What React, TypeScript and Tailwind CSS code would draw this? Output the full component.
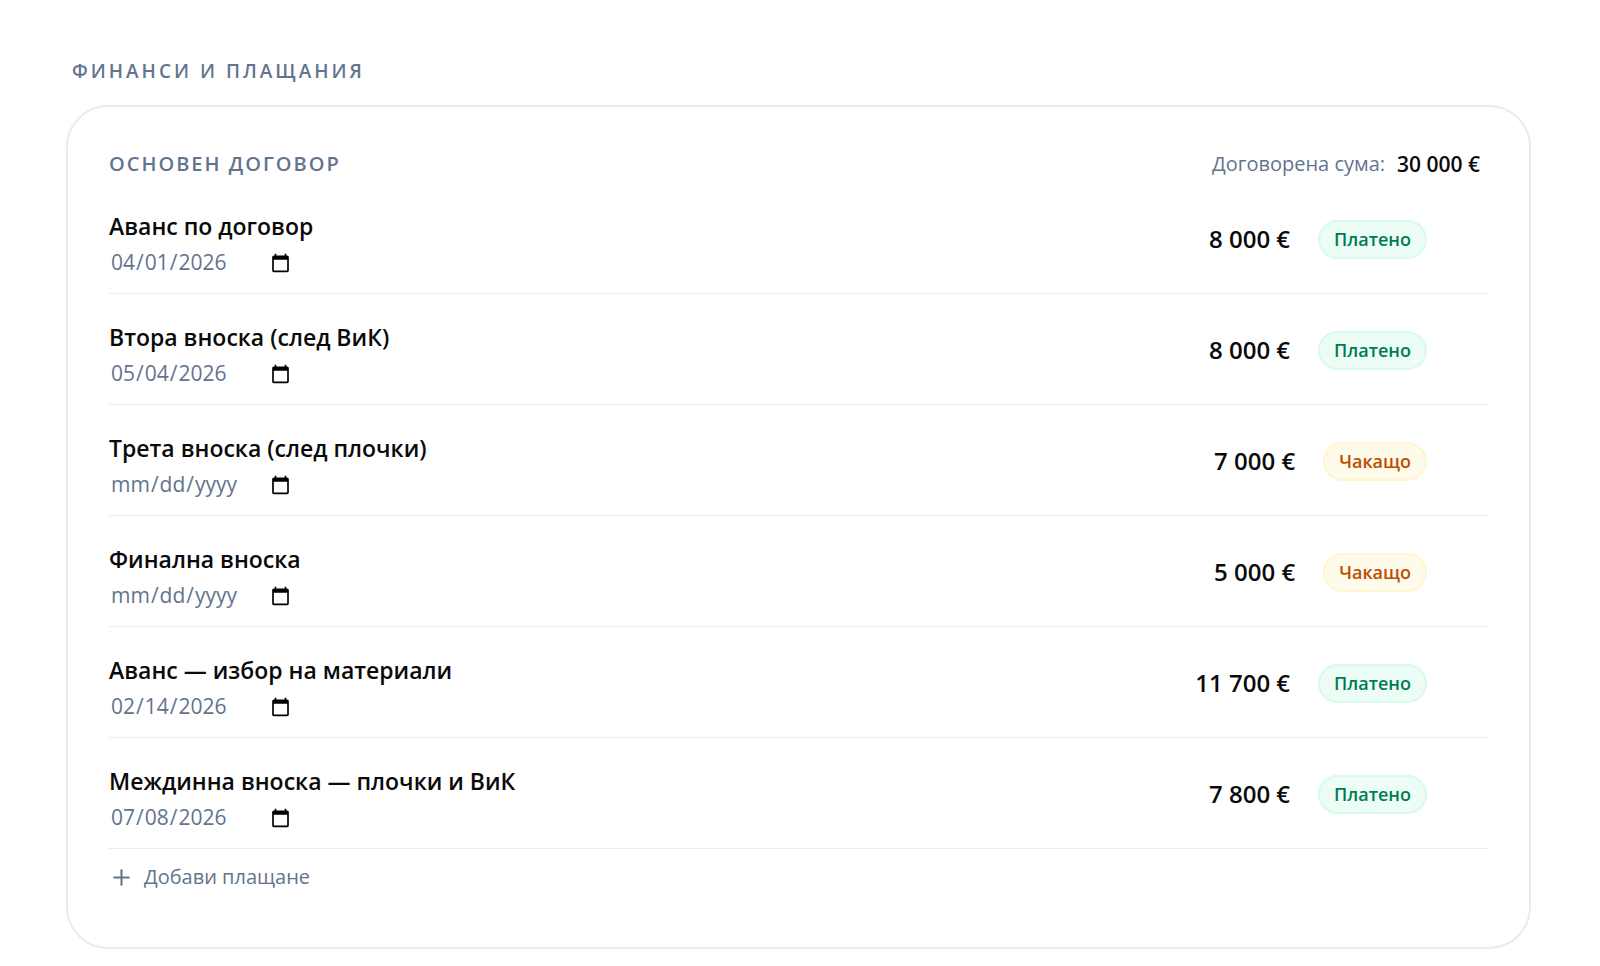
import { Plus } from "lucide-react";

type Status = "paid" | "pending";

interface Payment {
  id: string;
  title: string;
  date: string;
  amount: string;
  status: Status;
}

const payments: Payment[] = [
  { id: "p1", title: "Аванс по договор", date: "2026-04-01", amount: "8 000 €", status: "paid" },
  { id: "p2", title: "Втора вноска (след ВиК)", date: "2026-05-04", amount: "8 000 €", status: "paid" },
  { id: "p3", title: "Трета вноска (след плочки)", date: "", amount: "7 000 €", status: "pending" },
  { id: "p4", title: "Финална вноска", date: "", amount: "5 000 €", status: "pending" },
  { id: "p5", title: "Аванс — избор на материали", date: "2026-02-14", amount: "11 700 €", status: "paid" },
  { id: "p6", title: "Междинна вноска — плочки и ВиК", date: "2026-07-08", amount: "7 800 €", status: "paid" },
];

const statusLabel: Record<Status, string> = { paid: "Платено", pending: "Чакащо" };

const statusStyle: Record<Status, string> = {
  paid: "border-emerald-100/70 bg-emerald-50 text-emerald-700",
  pending: "border-amber-100/70 bg-amber-50 text-amber-700",
};

function PaymentRow({ payment }: { payment: Payment }) {
  return (
    <li className="flex h-[111px] items-center justify-between border-b border-[#ececec] pr-[61px]">
      <div className="flex flex-col items-start gap-1 pt-3">
        <label htmlFor={payment.id} className="text-[23px] leading-[34px] font-semibold">
          {payment.title}
        </label>
        <input
          id={payment.id}
          type="date"
          defaultValue={payment.date}
          className="h-8 w-[184px] bg-transparent pl-px text-[21px] text-slate-500 outline-none"
        />
      </div>
      <div className="flex items-center gap-7 pt-[2px]">
        <span className="text-[24px] leading-[34px] font-semibold">{payment.amount}</span>
        <button
          type="button"
          className={`h-[39px] rounded-full border-2 px-[14px] text-[18px] leading-[28px] font-semibold ${statusStyle[payment.status]}`}
        >
          {statusLabel[payment.status]}
        </button>
      </div>
    </li>
  );
}

export default function App() {
  return (
    <main className="min-h-screen bg-white pt-14 pr-[69px] pb-4 pl-[66px] font-['Open_Sans','Noto_Sans',sans-serif] text-neutral-950">
      <h2 className="px-[6px] text-[19px] leading-[30px] font-semibold tracking-[3px] text-slate-500">
        ФИНАНСИ И ПЛАЩАНИЯ
      </h2>
      <section className="mt-[19px] rounded-[42px] border-2 border-[#ebebeb] px-[41px] pt-[42px] pb-[55px]">
        <header className="flex items-center justify-between pr-2">
          <h3 className="text-[20px] leading-[30px] font-semibold tracking-[2px] text-slate-500">ОСНОВЕН ДОГОВОР</h3>
          <p className="flex gap-3 text-[20px] leading-[30px] text-slate-500">
            Договорена сума:
            <span className="text-[21px] font-semibold text-neutral-950">30 000 €</span>
          </p>
        </header>
        <ul className="mt-1">
          {payments.map((payment) => (
            <PaymentRow key={payment.id} payment={payment} />
          ))}
        </ul>
        <button type="button" className="mt-[13px] flex items-center gap-[10px] text-[20px] leading-[30px] text-slate-500">
          <Plus size={25} strokeWidth={2} />
          Добави плащане
        </button>
      </section>
    </main>
  );
}
